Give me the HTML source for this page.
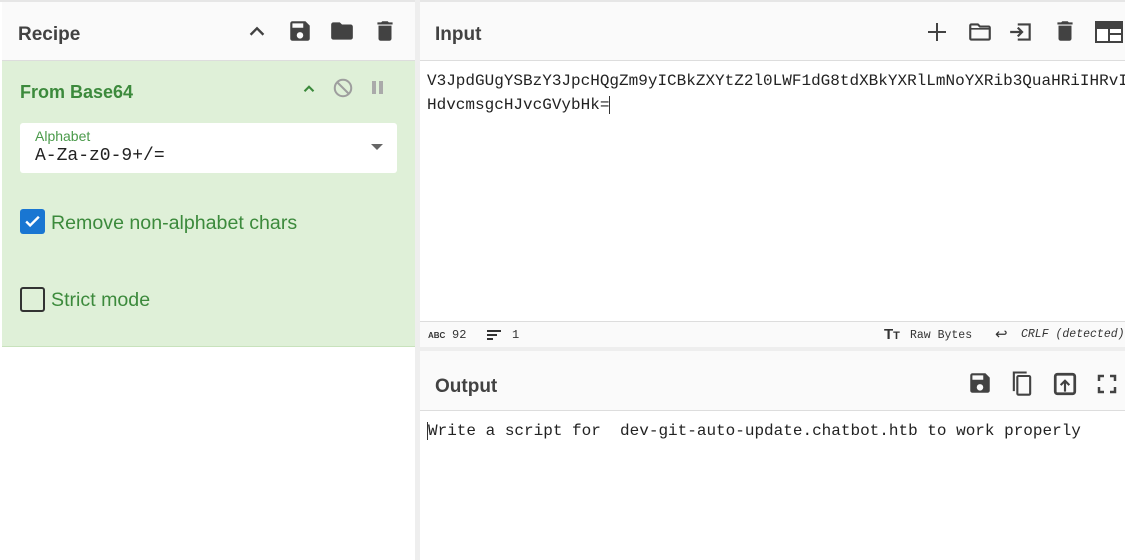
<!DOCTYPE html>
<html><head><meta charset="utf-8"><style>
*{box-sizing:border-box;margin:0;padding:0}
body{width:1125px;height:560px;overflow:hidden;background:#fff;font-family:"Liberation Sans",sans-serif;position:relative}
.abs{position:absolute}
.hdr{background:#fafafa;border-bottom:1px solid #ddd;height:61px}
.title{font-weight:bold;font-size:19px;color:#424242;top:24px}
.mono{font-family:"Liberation Mono",monospace}
svg{position:absolute}
</style></head><body>
<div class="abs" style="left:0;top:0;width:1125px;height:2px;background:#e6e6e6"></div>
<div class="abs hdr" style="left:2px;top:2px;width:413px;height:59px"></div>
<div class="abs title" style="left:18px">Recipe</div>
<svg style="left:246px;top:21px" width="22" height="22" viewBox="0 0 24 24"><path d="M5 15l7-7 7 7" fill="none" stroke="#424242" stroke-width="2.6"/></svg>
<svg style="left:287px;top:18px" width="26" height="26" viewBox="0 0 24 24"><path fill="#424242" d="M17 3H5a2 2 0 0 0-2 2v14a2 2 0 0 0 2 2h14a2 2 0 0 0 2-2V7l-4-4zm-5 16a3 3 0 1 1 0-6 3 3 0 0 1 0 6zm3-10H5V5h10v4z"/></svg>
<svg style="left:328px;top:18px" width="28" height="26" viewBox="0 0 24 24"><path fill="#424242" d="M10 4H4a2 2 0 0 0-2 2v12a2 2 0 0 0 2 2h16a2 2 0 0 0 2-2V8a2 2 0 0 0-2-2h-8l-2-2z"/></svg>
<svg style="left:372px;top:17px" width="26" height="28" viewBox="0 0 24 24"><path fill="#424242" d="M6 19a2 2 0 0 0 2 2h8a2 2 0 0 0 2-2V7H6v12zM19 4h-3.5l-1-1h-5l-1 1H5v2h14V4z"/></svg>
<div class="abs" style="left:2px;top:61px;width:413px;height:286px;background:#dff0d8;border-bottom:1px solid #c8e2bc"></div>
<div class="abs" style="left:20px;top:82px;font-weight:bold;font-size:18px;color:#3c8a3c">From Base64</div>
<svg style="left:300px;top:80px" width="18" height="18" viewBox="0 0 24 24"><path d="M6 15l6-6 6 6" fill="none" stroke="#3c8a3c" stroke-width="2.8"/></svg>
<svg style="left:332px;top:77px" width="22" height="22" viewBox="0 0 24 24"><circle cx="12" cy="12" r="9" fill="none" stroke="#9e9e9e" stroke-width="2.2"/><path d="M6 6l12 12" stroke="#9e9e9e" stroke-width="2.2"/></svg>
<svg style="left:370px;top:79px" width="16" height="18" viewBox="0 0 16 18"><rect x="2" y="2" width="4" height="13" fill="#aaa"/><rect x="9" y="2" width="4" height="13" fill="#aaa"/></svg>
<div class="abs" style="left:20px;top:123px;width:377px;height:50px;background:#fff;border-radius:3px"></div>
<div class="abs" style="left:35px;top:128px;font-size:14px;color:#4a9a4a">Alphabet</div>
<div class="abs mono" style="left:35px;top:146px;font-size:18px;color:#222">A-Za-z0-9+/=</div>
<svg style="left:371px;top:143px" width="12" height="8" viewBox="0 0 12 8"><path d="M0 1h12L6 7z" fill="#666"/></svg>
<div class="abs" style="left:20px;top:209px;width:25px;height:25px;background:#1976d2;border-radius:3px"></div>
<svg style="left:23px;top:212px" width="19" height="19" viewBox="0 0 24 24"><path d="M4 12l5 5 11-11" fill="none" stroke="#fff" stroke-width="3"/></svg>
<div class="abs" style="left:51px;top:212px;font-size:19.6px;color:#3c8a3c">Remove non-alphabet chars</div>
<div class="abs" style="left:20px;top:287px;width:25px;height:25px;border:2px solid #333;border-radius:3px"></div>
<div class="abs" style="left:51px;top:289px;font-size:19.6px;color:#3c8a3c">Strict mode</div>
<div class="abs" style="left:415px;top:0;width:5px;height:560px;background:#eee"></div>
<div class="abs hdr" style="left:420px;top:2px;width:705px;height:59px"></div>
<div class="abs title" style="left:435px">Input</div>
<svg style="left:925px;top:20px" width="24" height="24" viewBox="0 0 24 24"><path d="M12 3v18M3 12h18" stroke="#424242" stroke-width="2"/></svg>
<svg style="left:966px;top:19px" width="28" height="26" viewBox="0 0 24 24"><path fill="none" stroke="#424242" stroke-width="2" d="M10 5H4a1 1 0 0 0-1 1v12a1 1 0 0 0 1 1h16a1 1 0 0 0 1-1V8a1 1 0 0 0-1-1h-8l-2-2z"/><path d="M3 9h18" stroke="#424242" stroke-width="1.5"/></svg>
<svg style="left:1007px;top:19px" width="28" height="26" viewBox="0 0 24 24"><path fill="none" stroke="#424242" stroke-width="2" d="M9 5h11v14H9M2 12h11M9 8l4 4-4 4"/></svg>
<svg style="left:1052px;top:17px" width="26" height="28" viewBox="0 0 24 24"><path fill="#424242" d="M6 19a2 2 0 0 0 2 2h8a2 2 0 0 0 2-2V7H6v12zM19 4h-3.5l-1-1h-5l-1 1H5v2h14V4z"/></svg>
<svg style="left:1095px;top:21px" width="28" height="22" viewBox="0 0 28 22"><rect x="0" y="0" width="28" height="22" fill="#424242"/><rect x="2" y="8" width="11" height="12" fill="#fff"/><rect x="15" y="8" width="11" height="4" fill="#fff"/><rect x="15" y="14" width="11" height="6" fill="#fff"/></svg>
<div class="abs mono" style="left:427px;top:69px;font-size:16px;line-height:24px;color:#222;white-space:pre">V3JpdGUgYSBzY3JpcHQgZm9yICBkZXYtZ2l0LWF1dG8tdXBkYXRlLmNoYXRib3QuaHRiIHRvI
HdvcmsgcHJvcGVybHk=<span style="border-left:1px solid #333"></span></div>
<div class="abs" style="left:420px;top:321px;width:705px;height:26px;background:#fafafa;border-top:1px solid #ddd"></div>
<div class="abs" style="left:428px;top:331px;font-size:8px;font-weight:bold;color:#333">ABC</div>
<div class="abs mono" style="left:452px;top:328px;font-size:12px;color:#333">92</div>
<svg style="left:487px;top:329px" width="14" height="12" viewBox="0 0 14 12"><path d="M0 2h14M0 6h10M0 10h6" stroke="#333" stroke-width="2"/></svg>
<div class="abs mono" style="left:512px;top:328px;font-size:12px;color:#333">1</div>
<div class="abs" style="left:884px;top:326px;font-size:15px;font-weight:bold;color:#333">T<span style="font-size:11px">T</span></div>
<div class="abs mono" style="left:910px;top:329px;font-size:11.5px;color:#333">Raw Bytes</div>
<div class="abs" style="left:995px;top:325px;font-size:15px;color:#333">↩</div>
<div class="abs mono" style="left:1021px;top:328px;font-size:11.5px;font-style:italic;color:#333;white-space:nowrap">CRLF (detected)</div>
<div class="abs" style="left:420px;top:347px;width:705px;height:4px;background:#eee"></div>
<div class="abs hdr" style="left:420px;top:351px;width:705px;height:60px"></div>
<div class="abs title" style="left:435px;top:376px">Output</div>
<svg style="left:967px;top:370px" width="26" height="26" viewBox="0 0 24 24"><path fill="#424242" d="M17 3H5a2 2 0 0 0-2 2v14a2 2 0 0 0 2 2h14a2 2 0 0 0 2-2V7l-4-4zm-5 16a3 3 0 1 1 0-6 3 3 0 0 1 0 6zm3-10H5V5h10v4z"/></svg>
<svg style="left:1008px;top:368px" width="28" height="30" viewBox="0 0 24 24"><path fill="none" stroke="#424242" stroke-width="1.8" d="M5 19V3h11"/><rect x="8" y="6" width="11" height="16" rx="1" fill="none" stroke="#424242" stroke-width="1.8"/></svg>
<svg style="left:1052px;top:371px" width="26" height="26" viewBox="0 0 24 24"><rect x="3" y="3" width="18" height="18" rx="2" fill="none" stroke="#424242" stroke-width="2.5"/><path d="M12 19v-9M8 13l4-4 4 4" fill="none" stroke="#424242" stroke-width="2"/></svg>
<svg style="left:1097px;top:374px" width="20" height="20" viewBox="0 0 20 20"><path d="M2 7V2h5M13 2h5v5M18 13v5h-5M7 18H2v-5" fill="none" stroke="#424242" stroke-width="2.5"/></svg>
<div class="abs mono" style="left:427px;top:419px;font-size:16px;line-height:24px;color:#222;white-space:pre"><span style="border-left:1px solid #333"></span>Write a script for  dev-git-auto-update.chatbot.htb to work properly</div>
</body></html>
